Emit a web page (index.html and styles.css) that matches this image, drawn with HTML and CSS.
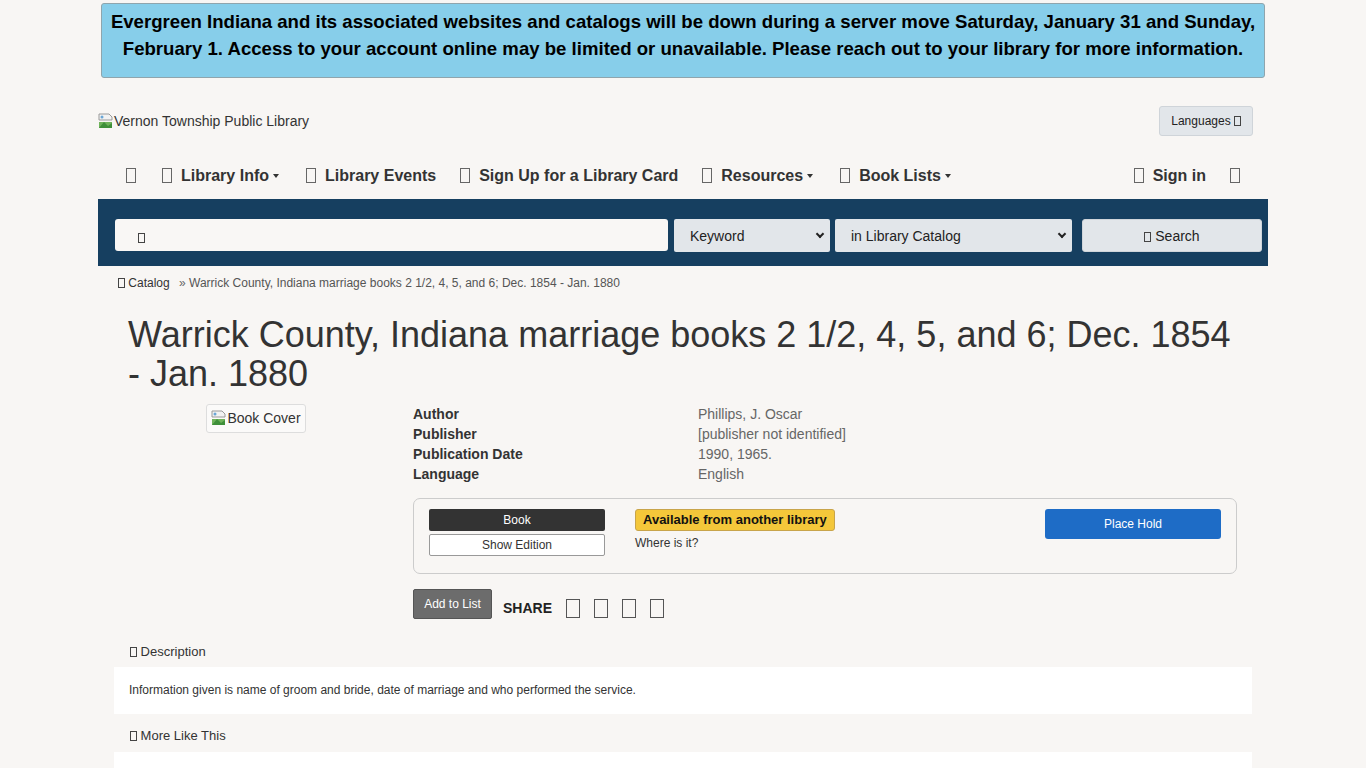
FILE: index.html
```html
<!DOCTYPE html>
<html lang="en">
<head>
<meta charset="utf-8">
<title>Warrick County, Indiana marriage books</title>
<link rel="stylesheet" href="styles.css">
</head>
<body>
<div class="alert-wrap">
  <div class="alert">Evergreen Indiana and its associated websites and catalogs will be down during a server move Saturday, January 31 and Sunday, February 1. Access to your account online may be limited or unavailable. Please reach out to your library for more information.</div>
</div>

<div class="container">
  <header class="top">
    <div class="logo">
      <svg class="broken" width="16" height="16" viewBox="0 0 16 16" aria-hidden="true"><path d="M1 1h10l3 3v3H1z" fill="#f2f2f2" stroke="#9a9a9a" stroke-width="1"/><path d="M1 9h13v6H1z" fill="#6fb35a"/><path d="M1 15l5-6 4 4 4-3v5z" fill="#3f8f3a"/><circle cx="4" cy="4" r="1.5" fill="#6aa6d6"/></svg><span>Vernon Township Public Library</span>
    </div>
    <button class="lang">Languages <span class="tofu sm"></span></button>
  </header>

  <nav class="mainnav">
    <ul class="navleft">
      <li class="icon-only"><span class="tofu"></span></li>
      <li><span class="tofu"></span>Library Info<span class="caret"></span></li>
      <li><span class="tofu"></span>Library Events</li>
      <li><span class="tofu"></span>Sign Up for a Library Card</li>
      <li><span class="tofu"></span>Resources<span class="caret"></span></li>
      <li><span class="tofu"></span>Book Lists<span class="caret"></span></li>
    </ul>
    <ul class="navright">
      <li><span class="tofu"></span>Sign in</li>
      <li class="icon-only"><span class="tofu"></span></li>
    </ul>
  </nav>

  <form class="searchbar">
    <div class="query"><span class="tofu sm"></span></div>
    <div class="select keyword">Keyword<span class="chev"></span></div>
    <div class="select scope">in Library Catalog<span class="chev"></span></div>
    <button type="button" class="searchbtn"><span class="tofu sm"></span> Search</button>
  </form>

  <div class="crumbs"><span class="tofu xs"></span> Catalog <span class="sep">»</span> <span class="cur">Warrick County, Indiana marriage books 2 1/2, 4, 5, and 6; Dec. 1854 - Jan. 1880</span></div>

  <main class="record">
    <h1>Warrick County, Indiana marriage books 2 1/2, 4, 5, and 6; Dec. 1854 - Jan. 1880</h1>
    <div class="row">
      <div class="cover-col">
        <div class="cover"><svg class="broken" width="16" height="16" viewBox="0 0 16 16" aria-hidden="true"><path d="M1 1h10l3 3v3H1z" fill="#f2f2f2" stroke="#9a9a9a" stroke-width="1"/><path d="M1 9h13v6H1z" fill="#6fb35a"/><path d="M1 15l5-6 4 4 4-3v5z" fill="#3f8f3a"/><circle cx="4" cy="4" r="1.5" fill="#6aa6d6"/></svg>Book Cover</div>
      </div>
      <div class="info-col">
        <dl class="details">
          <dt>Author</dt><dd>Phillips, J. Oscar</dd>
          <dt>Publisher</dt><dd>[publisher not identified]</dd>
          <dt>Publication Date</dt><dd>1990, 1965.</dd>
          <dt>Language</dt><dd>English</dd>
        </dl>
        <div class="holdings">
          <div class="fmt">
            <div class="badge-book">Book</div>
            <button class="edition">Show Edition</button>
          </div>
          <div class="avail">
            <span class="badge-avail">Available from another library</span>
            <div class="where">Where is it?</div>
          </div>
          <button class="hold">Place Hold</button>
        </div>
        <div class="actions">
          <button class="addlist">Add to List</button>
          <span class="share">SHARE</span>
          <span class="tofu lg"></span>
          <span class="tofu lg"></span>
          <span class="tofu lg"></span>
          <span class="tofu lg"></span>
        </div>
      </div>
    </div>

    <section class="panel">
      <div class="panel-head"><span class="tofu xs"></span> Description</div>
      <div class="panel-body">Information given is name of groom and bride, date of marriage and who performed the service.</div>
    </section>
    <section class="panel">
      <div class="panel-head"><span class="tofu xs"></span> More Like This</div>
      <div class="panel-body tall"></div>
    </section>
  </main>
</div>
</body>
</html>
```

FILE: styles.css
```css
* { box-sizing: border-box; }
html, body { margin: 0; padding: 0; }
body {
  background: #f8f6f4;
  font-family: "Liberation Sans", Arial, sans-serif;
  color: #333;
  font-size: 14px;
}
button { font-family: inherit; }

.tofu {
  display: inline-block;
  width: 10px;
  height: 15px;
  border: 1px solid #666;
  vertical-align: -2px;
}
.tofu.sm { width: 7px; height: 10px; border-color: #444; vertical-align: -1px; }
.tofu.xs { width: 7px; height: 10px; border-color: #444; vertical-align: -1px; }
.tofu.lg { width: 14px; height: 19px; border-color: #555; vertical-align: -4px; }

.alert-wrap { padding: 3px 101px 0; }
.alert {
  background: #87ceea;
  border: 1px solid #8fa5ad;
  border-radius: 3px;
  color: #000;
  font-weight: bold;
  font-size: 18.6px;
  line-height: 27px;
  text-align: center;
  padding: 4px 2px 15px;
  height: 75px;
}

.container { width: 1170px; margin: 0 auto; }

.top {
  display: flex;
  justify-content: space-between;
  align-items: center;
  height: 77px;
  padding-top: 8px;
  padding-right: 15px;
}
.logo { display: flex; align-items: center; font-size: 14px; color: #333; }
.lang {
  background: #e2e6ea;
  border: 1px solid #cfd4d9;
  border-radius: 3px;
  font-size: 12px;
  color: #222;
  height: 30px;
  padding: 0 11px;
}

.mainnav {
  display: flex;
  justify-content: space-between;
  align-items: center;
  height: 24px;
  margin-top: 9px;
  margin-bottom: 11px;
  padding: 0 28px 0 28px;
}
.mainnav ul {
  list-style: none;
  margin: 0;
  padding: 0;
  display: flex;
  gap: 24px;
}
.mainnav li {
  font-weight: bold;
  font-size: 16px;
  color: #333;
  white-space: nowrap;
}
.mainnav li .tofu { margin-right: 9px; }
.mainnav li.icon-only .tofu { margin-right: 0; }
.mainnav .navleft li.icon-only { margin-right: 2px; }
.caret {
  display: inline-block;
  margin-left: 4px;
  margin-right: 3px;
  border-top: 4px solid #333;
  border-left: 3.5px solid transparent;
  border-right: 3.5px solid transparent;
  vertical-align: 3px;
}

.searchbar {
  background: #163f60;
  height: 67px;
  margin: 0;
  padding: 20px 6px 0 17px;
  display: flex;
  align-items: flex-start;
}
.query {
  width: 553px;
  height: 32px;
  background: #f9f7f5;
  border-radius: 3px;
  padding: 10px 0 0 23px;
  margin-right: 6px;
}
.select {
  height: 33px;
  background: #e2e6ea;
  font-size: 14px;
  color: #222;
  display: flex;
  align-items: center;
  justify-content: space-between;
  padding: 0 7px 0 16px;
  border-radius: 2px;
}
.select.keyword { width: 156px; margin-right: 5px; }
.select.scope { width: 237px; margin-right: 10px; }
.chev {
  width: 6px;
  height: 6px;
  border-right: 2px solid #222;
  border-bottom: 2px solid #222;
  transform: rotate(45deg);
  margin-top: -4px;
}
.searchbtn {
  width: 180px;
  height: 33px;
  background: #e2e6ea;
  border: 1px solid #d0d5da;
  border-radius: 3px;
  font-size: 14px;
  color: #222;
}

.crumbs {
  font-size: 12px;
  color: #333;
  padding: 10px 0 0 20px;
  height: 31px;
}
.crumbs .sep { color: #666; margin-left: 6px; }
.crumbs .cur { color: #555; }

.record { padding: 0 16px; }
.record h1 {
  font-size: 36px;
  font-weight: normal;
  line-height: 39px;
  margin: 0;
  padding: 18px 14px 0;
  color: #333;
}
.row { display: flex; margin-top: 11px; }
.cover-col { width: 284px; display: flex; justify-content: center; align-items: flex-start; }
.cover {
  display: flex;
  align-items: center;
  border: 1px solid #ddd;
  border-radius: 3px;
  background: #fbfaf9;
  font-size: 14px;
  color: #333;
  padding: 5px 4px 6px 4px;
}
.info-col { flex: 1; padding: 0 15px; }
.details {
  display: grid;
  grid-template-columns: 285px 1fr;
  margin: 0;
  font-size: 14px;
  line-height: 20px;
}
.details dt { font-weight: bold; color: #333; }
.details dd { margin: 0; color: #666; }

.holdings {
  margin-top: 14px;
  border: 1px solid #ccc;
  border-radius: 7px;
  height: 76px;
  padding: 10px 15px;
  display: flex;
  align-items: flex-start;
}
.fmt { width: 176px; display: flex; flex-direction: column; gap: 3px; }
.badge-book {
  background: #333;
  color: #fff;
  font-size: 12px;
  text-align: center;
  height: 22px;
  line-height: 22px;
  border-radius: 2px;
}
.edition {
  background: #fff;
  border: 1px solid #999;
  border-radius: 2px;
  height: 22px;
  font-size: 12px;
  color: #333;
}
.avail { margin-left: 30px; flex: 1; }
.badge-avail {
  display: inline-block;
  background: #f4c73a;
  border: 1px solid #c8a44a;
  border-radius: 3px;
  font-weight: bold;
  font-size: 13px;
  color: #111;
  height: 22px;
  line-height: 20px;
  padding: 0 7px;
}
.where { font-size: 12px; color: #333; margin-top: 5px; }
.hold {
  width: 176px;
  height: 30px;
  background: #1e6cc6;
  border: none;
  border-radius: 3px;
  color: #fff;
  font-size: 12px;
}

.actions {
  display: flex;
  align-items: flex-end;
  margin-top: 15px;
  gap: 14px;
}
.addlist {
  background: #6c6c6c;
  color: #fff;
  border: 1px solid #555;
  border-radius: 2px;
  font-size: 12px;
  height: 30px;
  width: 79px;
  margin-right: -3px;
}
.share { font-weight: bold; font-size: 14px; line-height: 16px; color: #222; margin-bottom: 3px; }
.actions .tofu.lg { margin-bottom: 1px; }

.panel-head {
  font-size: 13px;
  color: #333;
  padding: 25px 0 0 16px;
  height: 48px;
}
.panel-body {
  background: #fff;
  font-size: 12px;
  color: #333;
  padding: 16px 15px;
  height: 47px;
}
.panel + .panel .panel-head { padding-top: 14px; height: 38px; }
.panel-body.tall { height: 40px; }
```
